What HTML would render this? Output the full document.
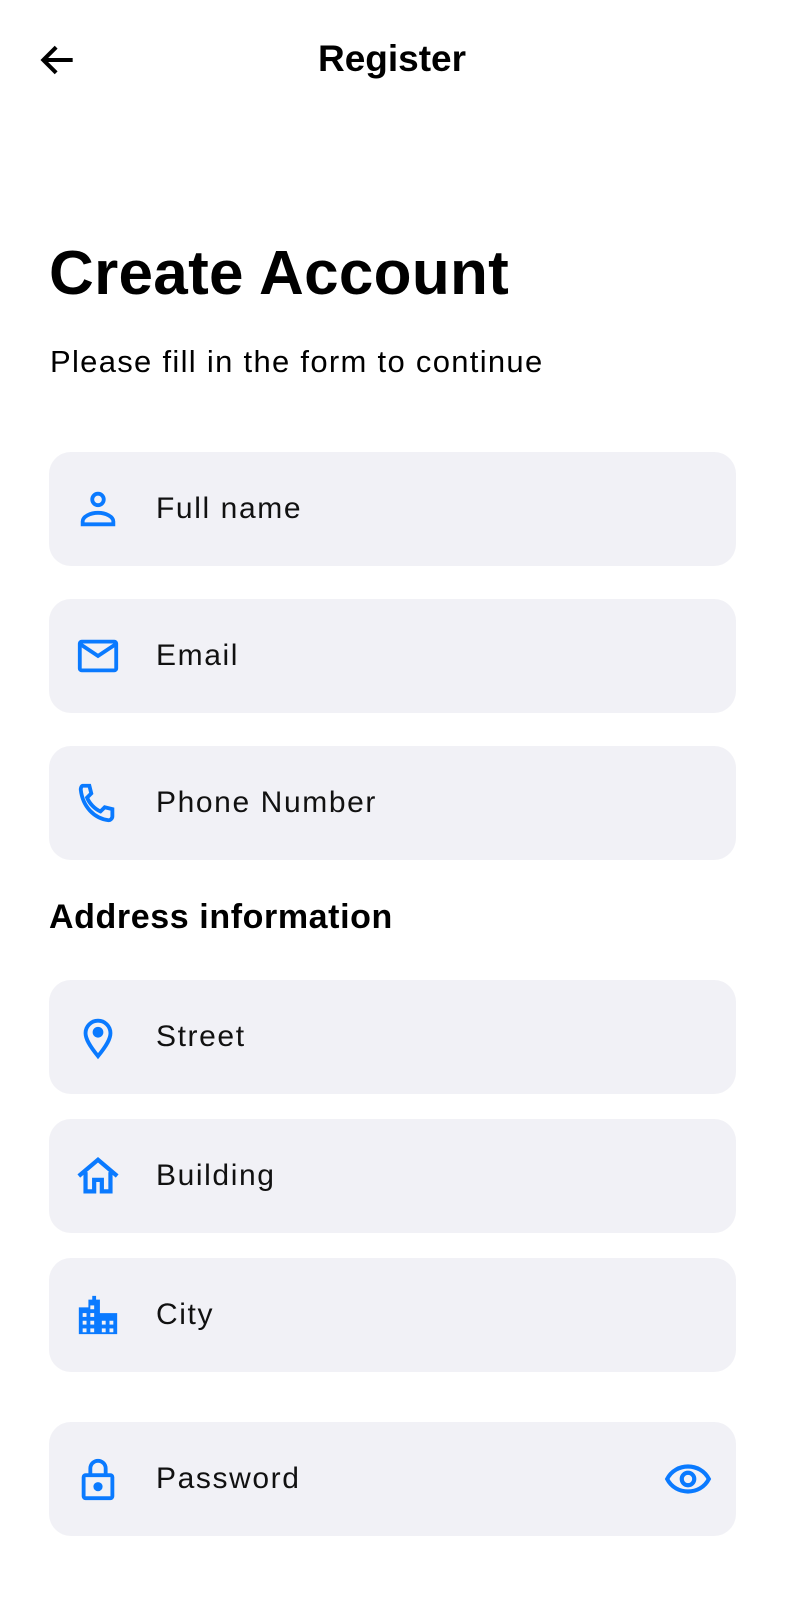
<!DOCTYPE html>
<html><head><style>
body{margin:0;width:801px;height:1600px;background:#fff;font-family:"Liberation Sans",Roboto,sans-serif;color:#000;position:relative;overflow:hidden}
.a{position:absolute}
.f{position:absolute;left:49px;width:687px;height:114px;background:#f1f1f6;border-radius:22px}
.f span{position:absolute;left:107px;top:0;line-height:114px;font-size:30px;letter-spacing:1.6px;color:#111}
.f svg{position:absolute;left:26px;top:34px;width:46px;height:46px}
</style></head><body>
<svg class="a" style="left:36px;top:38px" width="44" height="44" viewBox="0 0 24 24"><path d="M20 12H5M11 5l-7 7 7 7" fill="none" stroke="#000" stroke-width="2.2"/></svg>
<div class="a" style="left:0;width:784px;text-align:center;top:38px;font-size:37px;font-weight:bold">Register</div>
<div class="a" style="left:49px;top:238px;font-size:62px;font-weight:bold;letter-spacing:0.3px">Create Account</div>
<div class="a" style="left:50px;top:344px;font-size:31px;letter-spacing:1.3px">Please fill in the form to continue</div>

<div class="f" style="top:452px"><svg viewBox="0 0 24 24" fill="none" stroke="#0a7aff" stroke-width="2"><circle cx="12" cy="7" r="3"/><path d="M4 20v-1.5c0-2.5 4-4.5 8-4.5s8 2 8 4.5V20z"/></svg><span>Full name</span></div>
<div class="f" style="top:599px"><svg viewBox="0 0 24 24" fill="none" stroke="#0a7aff" stroke-width="2"><rect x="2.5" y="4.5" width="19" height="15" rx="1"/><path d="M3 6l9 6 9-6"/></svg><span>Email</span></div>
<div class="f" style="top:746px"><svg viewBox="0 0 24 24" fill="none" stroke="#0a7aff" stroke-width="2"><path d="M4 3h3.5l1 4-2.2 2.2c1.2 3 4 6 7 7.2l2.2-2.2 4 1V19c0 1-1 2-2 2C10 20 4 14 3 5c0-1 .5-2 1-2z"/></svg><span>Phone Number</span></div>

<div class="a" style="left:49px;top:898px;font-size:34px;font-weight:bold;letter-spacing:0.6px">Address information</div>

<div class="f" style="top:980px"><svg viewBox="0 0 24 24" fill="none" stroke="#0a7aff" stroke-width="2"><path d="M12 22c-4.5-5.5-6.5-9-6.5-12a6.5 6.5 0 0113 0c0 3-2 6.5-6.5 12z"/><circle cx="12" cy="9.5" r="1.8" fill="#0a7aff"/></svg><span>Street</span></div>
<div class="f" style="top:1119px"><svg viewBox="0 0 24 24" fill="none" stroke="#0a7aff" stroke-width="2.2"><path d="M2 12l10-8.5L22 12M5.5 10v10h4.5v-6h4v6h4.5V10"/></svg><span>Building</span></div>
<div class="f" style="top:1258px"><svg viewBox="0 0 24 24"><path fill="#0a7aff" d="M2 8h5V4h2V2h2v2h2v7h9v11H2z"/><g fill="#f1f1f6"><rect x="4" y="11" width="2" height="2"/><rect x="4" y="15" width="2" height="2"/><rect x="8" y="7" width="2" height="2"/><rect x="8" y="11" width="2" height="2"/><rect x="8" y="15" width="2" height="2"/><rect x="8" y="19" width="2" height="2"/><rect x="4" y="19" width="2" height="2"/><rect x="14" y="15" width="2" height="2"/><rect x="14" y="19" width="2" height="2"/><rect x="18" y="15" width="2" height="2"/><rect x="18" y="19" width="2" height="2"/></g></svg><span>City</span></div>
<div class="f" style="top:1422px"><svg viewBox="0 0 24 24" fill="none" stroke="#0a7aff" stroke-width="2"><rect x="4.5" y="10" width="15" height="12" rx="1"/><path d="M8 10V6.5a4 4 0 018 0V10"/><circle cx="12" cy="16" r="1.4" fill="#0a7aff"/></svg><span>Password</span>
<svg style="left:614px;top:32px;width:50px;height:50px" viewBox="0 0 24 24" fill="none" stroke="#0a7aff" stroke-width="2"><path d="M2 12c2-4 6-6 10-6s8 2 10 6c-2 4-6 6-10 6S4 16 2 12z"/><circle cx="12" cy="12" r="3"/></svg></div>
</body></html>
